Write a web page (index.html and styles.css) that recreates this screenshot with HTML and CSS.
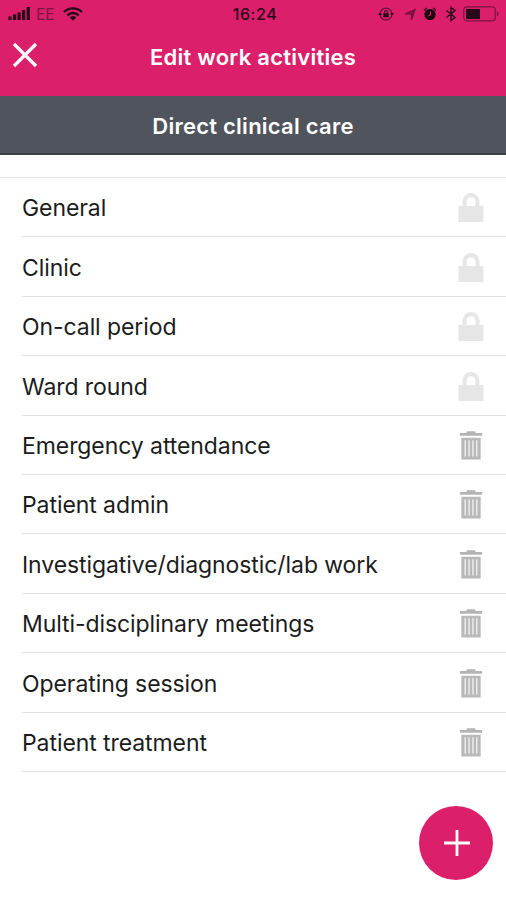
FILE: index.html
```html
<!DOCTYPE html>
<html lang="en">
<head>
<meta charset="utf-8">
<title>Edit work activities</title>
<link rel="stylesheet" href="styles.css">
</head>
<body>
<svg class="defs" aria-hidden="true">
  <symbol id="lock" viewBox="0 0 26 29">
    <path d="M4.500 13V8.500a8.500 8.500 0 0 1 17 0V13H25.500V29H.5V13ZM8.500 13h9V8.800a4.500 4.500 0 0 0-9 0Z" fill="#e6e6e6" fill-rule="evenodd"/>
  </symbol>
  <symbol id="trash" viewBox="0 0 24 30">
    <path d="M8 .3h8l1 1.700h6.500v2.800H.5V2H7Z" fill="#b4b4b4"/>
    <path d="M2 7h20v22.500H2Z" fill="#b9b9b9"/>
    <path d="M6 9.500v17M10 9.500v17M14 9.500v17M18 9.500v17" stroke="#ededed" stroke-width="1.500"/>
  </symbol>
</svg>
<header class="header">
  <div class="status">
    <div class="carrier">
      <svg width="23" height="14" viewBox="0 0 23 14"><path d="M.5 9.500h3V13h-3ZM5 7.500h3.200V13H5ZM9.500 5.500h3.200V13H9.500ZM14 3h3.200v10H14ZM18.600 0h3.200v13h-3.200Z"/></svg>
      <span class="network">EE</span>
      <svg class="wifi" width="20" height="14" viewBox="0 0 20 14"><path d="M1 5a13 13 0 0 1 18 0M4.300 8.300a8.200 8.200 0 0 1 11.400 0" fill="none" stroke="#29071a" stroke-width="2.300"/><path d="M6.700 10.400a5 5 0 0 1 6.600 0L10 13.700Z"/></svg>
    </div>
    <time class="clock">16:24</time>
    <div class="indicators">
      <svg width="16" height="14" viewBox="0 0 16 14"><circle cx="8" cy="7" r="5.900" fill="none" stroke="#6b103b" stroke-width="1.300"/><path d="m12 6 2 2.500 2-2.500ZM0 8l2-2.500L4 8ZM5.300 6.200h5.400v4H5.300Z"/><path d="M6.500 6.500V5a1.500 1.500 0 0 1 3 0v1.500" fill="none" stroke="#29071a"/></svg>
      <svg width="12" height="14" viewBox="0 0 12 14"><path d="M1 7 11 2.500 7.500 12.500V7Z" fill="#8a1549" stroke="#6b103b" stroke-width="1.200"/></svg>
      <svg width="14" height="14" viewBox="0 0 14 14"><circle cx="7" cy="7.500" r="5.600" fill="#190410"/><path d="M1 3.500 3.800 1M10.200 1 13 3.500" stroke="#29071a" stroke-width="1.500"/><path d="M7.500 4.500v3.200L5.300 9" fill="none" stroke="#db1f6b" stroke-width="1.200"/></svg>
      <svg width="12" height="16" viewBox="0 0 12 16"><path d="m1.500 4.500 8.500 7L6 14.500v-13l4 3-8.500 7" fill="none" stroke="#29071a" stroke-width="1.400"/></svg>
      <svg class="battery" width="37" height="16" viewBox="0 0 37 16"><rect x=".8" y=".8" width="31.500" height="14" rx="3" fill="none" stroke="#7c1442" stroke-width="1.200"/><path d="M3 3h14v10H3ZM34 5.500q2.500 2.300 0 4.600Z"/></svg>
    </div>
  </div>
  <div class="nav">
    <button class="close" aria-label="Close"><svg width="26" height="26" viewBox="0 0 26 26"><path d="m2 2 22 22M24 2 2 24" stroke="#fff" stroke-width="3.200"/></svg></button>
    <h1 class="title">Edit work activities</h1>
  </div>
</header>
<h2 class="category">Direct clinical care</h2>
<ul class="list">
  <li class="row"><span>General</span><svg class="icon"><use href="#lock"/></svg></li>
  <li class="row"><span>Clinic</span><svg class="icon"><use href="#lock"/></svg></li>
  <li class="row"><span>On-call period</span><svg class="icon"><use href="#lock"/></svg></li>
  <li class="row"><span>Ward round</span><svg class="icon"><use href="#lock"/></svg></li>
  <li class="row"><span>Emergency attendance</span><svg class="icon"><use href="#trash"/></svg></li>
  <li class="row"><span>Patient admin</span><svg class="icon"><use href="#trash"/></svg></li>
  <li class="row"><span>Investigative/diagnostic/lab work</span><svg class="icon"><use href="#trash"/></svg></li>
  <li class="row"><span>Multi-disciplinary meetings</span><svg class="icon"><use href="#trash"/></svg></li>
  <li class="row"><span>Operating session</span><svg class="icon"><use href="#trash"/></svg></li>
  <li class="row"><span>Patient treatment</span><svg class="icon"><use href="#trash"/></svg></li>
</ul>
<button class="add" aria-label="Add activity"><svg width="26" height="26" viewBox="0 0 26 26"><path d="M13 0v26M0 13h26" stroke="#fff" stroke-width="2.800"/></svg></button>
</body>
</html>
```

FILE: styles.css
```css
* { box-sizing: border-box; }
body {
  margin: 0;
  height: 900px;
  overflow: hidden;
  background: #fff;
  color: #1c1c1c;
  font-family: Inter, "Liberation Sans", sans-serif;
}
svg { display: block; flex: none; }
button { border: 0; padding: 0; }
.defs { display: none; }
.header {
  height: 96px;
  background: #db1f6b;
}
.status {
  display: grid;
  grid-template-columns: 1fr auto 1fr;
  align-items: center;
  height: 28px;
  padding: 0 6px 0 8px;
  color: #29071a;
  fill: #29071a;
}
.carrier, .indicators { display: flex; align-items: center; }
.network {
  margin-left: 5px;
  color: #7c1442;
  font-size: 15.500px;
}
.wifi { margin-left: 8px; }
.clock {
  padding-left: 2px;
  font-size: 16px;
  font-weight: 500;
  letter-spacing: 0.6px;
}
.indicators { justify-content: flex-end; gap: 9px; }
.indicators svg:nth-child(2) { margin-right: -3px; }
.indicators svg:nth-child(3) { margin: 0 -1px 0 1px; }
.indicators svg:first-child { margin-right: 1px; }
.battery { margin-left: -3px; }
.nav {
  display: grid;
  grid-template-columns: 50px 1fr 50px;
  align-items: center;
  height: 56px;
}
.close {
  display: flex;
  margin-top: -2px;
  padding-left: 12px;
  background: none;
}
.title, .category {
  margin: 0;
  color: #fff;
  font-size: 22px;
  font-weight: 600;
  letter-spacing: 0.250px;
  text-align: center;
}
.title { padding-top: 2px; }
.category {
  height: 59px;
  border-bottom: 2px solid #3b3e46;
  background: #50545d;
  line-height: 61px;
}
.list {
  margin: 22px 0 0;
  padding: 0 0 0 22px;
  border-top: 1.500px solid #e6e6e6;
  list-style: none;
}
.row {
  display: flex;
  align-items: center;
  justify-content: space-between;
  height: 59.400px;
  padding-right: 22px;
  border-bottom: 1.500px solid #e3e3e3;
  font-size: 23px;
  letter-spacing: -0.080px;
  line-height: 30px;
}
.row span { margin-top: 2.400px; }
.icon { width: 26px; height: 29px; margin-top: 1.500px; }
.add {
  position: fixed;
  right: 13px;
  bottom: 20px;
  display: grid;
  place-items: center;
  width: 74px;
  height: 74px;
  padding-left: 1px;
  border-radius: 50%;
  background: #db1f6b;
}
```
